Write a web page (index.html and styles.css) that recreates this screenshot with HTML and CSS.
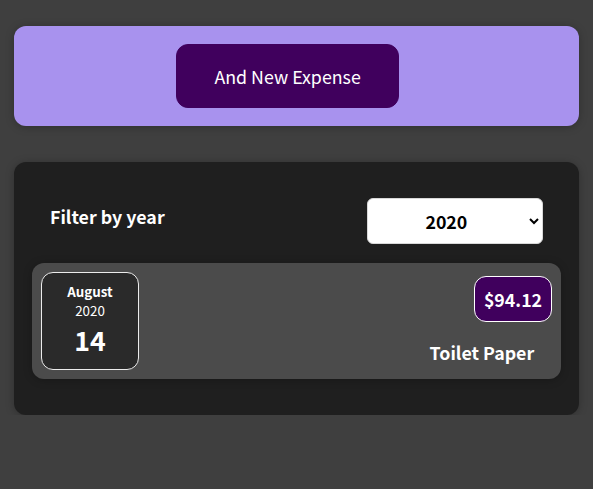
FILE: index.html
```html
<!DOCTYPE html>
<html lang="en">
<head>
<meta charset="utf-8">
<title>Expenses</title>
<link rel="stylesheet" href="styles.css">
</head>
<body>
  <div class="new-expense">
    <button class="new-expense__btn" type="button">And New Expense</button>
  </div>
  <div class="expenses card">
    <div class="expenses-filter">
      <div class="expenses-filter__control">
        <label for="year">Filter by year</label>
        <select id="year">
          <option>2022</option>
          <option>2021</option>
          <option selected>2020</option>
          <option>2019</option>
        </select>
      </div>
    </div>
    <div class="expense-item card">
      <div class="expense-date">
        <div class="expense-date__month">August</div>
        <div class="expense-date__year">2020</div>
        <div class="expense-date__day">14</div>
      </div>
      <div class="expense-item__description">
        <h2>Toilet Paper</h2>
        <div class="expense-item__price">$94.12</div>
      </div>
    </div>
  </div>
</body>
</html>
```

FILE: styles.css
```css
* { box-sizing: border-box; }

html {
  font-family: "Noto Sans CJK JP", "Noto Sans", sans-serif;
  font-size: 17.8px;
}

body {
  margin: 0;
  padding-top: 26px;
  background-color: #3f3f3f;
}

.card {
  border-radius: 12px;
  box-shadow: 0 1px 8px rgba(0, 0, 0, 0.25);
}

.new-expense {
  background-color: #a892ee;
  padding: 18px;
  margin: 0 auto 36px;
  width: 565px;
  border-radius: 12px;
  text-align: center;
  box-shadow: 0 1px 8px rgba(0, 0, 0, 0.25);
}

.new-expense__btn {
  font: inherit;
  font-size: 1rem;
  cursor: pointer;
  padding: 1rem 37px;
  border: 1px solid #40005d;
  background-color: #40005d;
  color: white;
  border-radius: 12px;
  margin-right: 1rem;
}

.expenses {
  padding: 18px;
  background-color: #1f1f1f;
  margin: 0 auto;
  width: 565px;
}

.expenses-filter {
  color: white;
  padding: 0 18px;
}

.expenses-filter__control {
  display: flex;
  width: 100%;
  align-items: center;
  justify-content: space-between;
  margin: 18px 0;
}

.expenses-filter label {
  font-weight: bold;
  font-size: 1rem;
  margin-bottom: 0.5rem;
}

.expenses-filter select {
  font: inherit;
  font-size: 1rem;
  font-weight: bold;
  width: 176px;
  height: 46px;
  padding: 0.5rem 3rem;
  border: 1px solid #d8d8d8;
  border-radius: 6px;
  background: #fff;
  color: #000;
}

.expense-item {
  display: flex;
  justify-content: space-between;
  align-items: center;
  padding: 9px;
  margin: 19px 0 18px;
  background-color: #4b4b4b;
}

.expense-date {
  display: flex;
  flex-direction: column;
  width: 98px;
  height: 98px;
  border: 1px solid #ececec;
  background-color: #2a2a2a;
  color: white;
  border-radius: 12px;
  align-items: center;
  justify-content: center;
}

.expense-date__month {
  font-size: 0.75rem;
  font-weight: bold;
}

.expense-date__year {
  font-size: 0.75rem;
}

.expense-date__day {
  font-size: 1.5rem;
  font-weight: bold;
}

.expense-item__description {
  display: flex;
  flex-direction: column-reverse;
  align-items: flex-end;
  justify-content: flex-start;
  gap: 1rem;
  flex: 1;
}

.expense-item__description h2 {
  font-size: 1rem;
  margin: 0 1rem;
  color: white;
}

.expense-item__price {
  font-size: 1rem;
  font-weight: bold;
  color: white;
  background-color: #40005d;
  border: 1px solid white;
  padding: 0.5rem;
  border-radius: 12px;
}
```
